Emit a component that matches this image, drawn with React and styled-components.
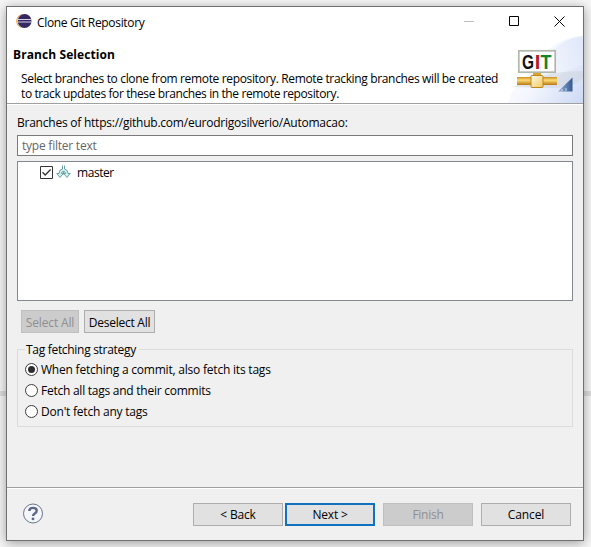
import React from "react";
import styled, { createGlobalStyle } from "styled-components";

const Global = createGlobalStyle`
  * { box-sizing: border-box; }
  body { margin: 0; background: #f7f7f7; overflow: hidden; }
`;

const Desktop = styled.div`
  width: 591px;
  height: 547px;
  padding: 6px;
  background: linear-gradient(#f7f7f7 391px, #dedede 391px, #dedede 396px, #f7f7f7 396px);
  font-family: "Open Sans", "Noto Sans", sans-serif;
  font-size: 12px;
  line-height: 15px;
  color: #000;
`;

const Window = styled.main`
  width: 578px;
  height: 535px;
  border: 1px solid #707070;
  background: #f0f0f0;
  box-shadow: 0 2px 11px rgba(0, 0, 0, 0.38);
  display: flex;
  flex-direction: column;
`;

const Label = styled.span`
  white-space: pre;
  letter-spacing: ${(p) => p.$track || 0}px;
`;

const Header = styled.header`
  position: relative;
  height: 97px;
  flex: none;
  background: #fff;
  border-bottom: 1px solid #a0a0a0;
`;

const TitleBar = styled.div`
  height: 28px;
  padding-left: 9px;
  display: flex;
  align-items: center;
  gap: 5px;
`;

const WindowTitle = styled(Label)`
  padding-top: 2px;
`;

const WindowControls = styled.div`
  margin-left: auto;
  padding-right: 1px;
  display: flex;
`;

const Control = styled.button`
  width: 45px;
  height: 28px;
  border: 0;
  padding: 0;
  background: none;
  display: grid;
  place-items: center;
`;

const PageTitle = styled.h1`
  margin: 12px 0 0 6px;
  font-size: 12px;
  line-height: 15px;
  font-weight: 700;
`;

const Description = styled.p`
  margin: 9px 0 0 14px;
  display: flex;
  flex-direction: column;
`;

const Banner = styled.svg`
  position: absolute;
  right: 0;
  bottom: 0;
`;

const Body = styled.section`
  flex: 1;
  border-top: 1px solid #fff;
  padding: 10px 10px 0;
`;

const Caption = styled.div`
  height: 15px;
`;

const FilterInput = styled.div`
  height: 21px;
  margin-top: 5px;
  padding: 2px 4px;
  border: 1px solid #7a7a7a;
  background: #fff;
  color: #666;
`;

const BranchList = styled.div`
  height: 140px;
  margin-top: 5px;
  padding: 3px 0 0 22px;
  border: 1px solid #828790;
  background: #fff;
`;

const BranchRow = styled.div`
  height: 15px;
  display: flex;
  align-items: center;
  gap: 3px;
`;

const BranchName = styled(Label)`
  margin: 0 0 0 2px;
`;

const Button = styled.button`
  width: ${(p) => p.$width}px;
  height: 23px;
  margin: 0;
  padding: 1px 0 0;
  font: inherit;
  color: ${(p) => (p.disabled ? "#8f8f8f" : "#000")};
  background: ${(p) => (p.disabled ? "#cccccc" : "#e1e1e1")};
  border: ${(p) => (p.$primary ? "2px solid #0f72c0" : `1px solid ${p.disabled ? "#bfbfbf" : "#adadad"}`)};
`;

const SelectionButtons = styled.div`
  display: flex;
  gap: 5px;
  margin: 9px 0 0 4px;
`;

const TagGroup = styled.fieldset`
  height: 85px;
  margin: 9px 0 0;
  padding: 2px 7px 0;
  border: 1px solid #dcdcdc;
  min-width: 0;
`;

const Legend = styled.legend`
  margin: 0;
  padding: 0 3px 0 1px;
`;

const RadioRow = styled.label`
  height: 21px;
  display: flex;
  align-items: center;
  gap: 3px;
`;

const Footer = styled.footer`
  height: 53px;
  flex: none;
  border-top: 1px solid #a0a0a0;
  box-shadow: inset 0 1px #fff;
  padding: 0 12px 0 15px;
  display: flex;
  align-items: center;
`;

const FooterButtons = styled.div`
  margin-left: auto;
  display: flex;
  gap: 8px;
`;

const Navigation = styled.div`
  display: flex;
  gap: 2px;
`;

const EclipseIcon = () => (
  <svg width="16" height="16" viewBox="0 0 16 16">
    <circle cx="7.2" cy="8" r="7" fill="#f39a32" />
    <circle cx="8.2" cy="8" r="7" fill="#fff" />
    <circle cx="8.6" cy="8" r="6.9" fill="#342762" />
    <path d="M1.3 6.500h14.500M1.3 9h14.500" stroke="#d4d1e7" strokeWidth="1.200" />
  </svg>
);

const BranchIcon = () => (
  <svg width="16" height="15" viewBox="0 0 16 15">
    <path d="M6.500.500v3.500Q3 4.500 3 8.500H.8L4 12.500l3.200-4H5.500Q5.500 6.500 7.500 6.300V9.500M8.500.500v3.500Q12 4.500 12 8.500h2.200L11 12.500l-3.200-4h1.700Q9.500 6.500 7.500 6.300" fill="#d3efec" stroke="#5b9ba1" strokeWidth=".9" strokeLinejoin="round" />
  </svg>
);

const CheckIcon = () => (
  <svg width="13" height="13" viewBox="0 0 13 13">
    <path d="M.5.500h12v12H.5z" fill="#fff" stroke="#333" />
    <path d="M2.500 6.300 5.200 9 10.600 3.500" fill="none" stroke="#333" strokeWidth="1.300" />
  </svg>
);

const RadioIcon = ({ checked }) => (
  <svg width="13" height="13" viewBox="0 0 13 13">
    <circle cx="6.500" cy="6.500" r="6" fill="#fff" stroke="#3c3c3c" />
    {checked && <circle cx="6.500" cy="6.500" r="3.500" fill="#2d2d2d" />}
  </svg>
);

const HelpIcon = () => (
  <svg width="22" height="22" viewBox="0 0 22 22">
    <circle cx="11" cy="10.500" r="9.500" fill="#f5f6f9" stroke="#68728f" />
    <path d="M7.300 8Q7.300 4.900 11 4.900q3.700 0 3.700 2.900 0 1.600-1.900 2.700-1.700 1-1.700 2.600" fill="none" stroke="#5d6888" strokeWidth="2.400" />
    <circle cx="11" cy="15.900" r="1.400" fill="#5d6888" />
  </svg>
);

const GitBanner = () => (
  <Banner width="75" height="70" viewBox="0 0 75 70">
    <defs>
      <linearGradient id="sky" x1="0" y1="0.300" x2="1" y2="0.900">
        <stop offset="0" stopColor="#fff" />
        <stop offset=".45" stopColor="#f3f6fd" />
        <stop offset="1" stopColor="#cfdbf5" />
      </linearGradient>
      <linearGradient id="swoosh" x1="0" y1="1" x2="1" y2="0">
        <stop offset="0" stopColor="#f9fbff" />
        <stop offset="1" stopColor="#dbe4f8" />
      </linearGradient>
      <linearGradient id="gold" x1="0" y1="0" x2="0" y2="1">
        <stop offset="0" stopColor="#c98c20" />
        <stop offset=".4" stopColor="#ffdc74" />
        <stop offset="1" stopColor="#b87711" />
      </linearGradient>
      <linearGradient id="joint" x1="0" y1="0" x2="1" y2="1">
        <stop offset="0" stopColor="#fffbe8" />
        <stop offset="1" stopColor="#f1c85c" />
      </linearGradient>
      <linearGradient id="corner">
        <stop offset="0" stopColor="#9eb5d8" />
        <stop offset="1" stopColor="#31588f" />
      </linearGradient>
    </defs>
    <path d="M0 70C4 52 20 45 31 27 42 12 57 4 75 3v67z" fill="url(#sky)" />
    <path d="M32 32C42 16 56 6 75 3v29Q57 36 48 47z" fill="url(#swoosh)" opacity=".7" />
    <path d="M5 54Q35 38 75 38v7Q66 55 44 55z" fill="#ccd1dc" opacity=".5" />
    <rect x="10.800" y="17.800" width="36.400" height="21.400" fill="#fff" stroke="#b2b7ac" strokeWidth="1.700" />
    <g fontFamily="Liberation Sans" fontWeight="700" fontSize="20">
      <text x="14" y="35.800" textLength="12" lengthAdjust="spacingAndGlyphs" fill="#111">G</text>
      <text x="26.800" y="35.800" fill="#ba1722">I</text>
      <text x="32.500" y="35.800" textLength="11" lengthAdjust="spacingAndGlyphs" fill="#168327">T</text>
    </g>
    <path d="M9 44h40v8H9z" fill="url(#gold)" />
    <path d="M25 40h8v4h-8z" fill="#d9a52d" />
    <rect x="23" y="42.500" width="12" height="12" rx="1" fill="url(#joint)" stroke="#be851d" />
    <path d="M50 58.500 64.500 44.500v14z" fill="url(#corner)" />
    <path d="M54 58v-2M58 58v-3" stroke="#e7effb" strokeWidth=".8" />
  </Banner>
);

const strategies = [
  { text: "When fetching a commit, also fetch its tags", track: -0.21, checked: true },
  { text: "Fetch all tags and their commits", track: -0.25 },
  { text: "Don't fetch any tags", track: -0.22 },
];

export default function App() {
  return (
    <>
      <Global />
      <Desktop>
        <Window>
          <Header>
            <GitBanner />
            <TitleBar>
              <EclipseIcon />
              <WindowTitle $track={-0.33}>Clone Git Repository</WindowTitle>
              <WindowControls>
                <Control aria-label="Minimize"><svg width="11" height="11"><path d="M0 5.500h10" stroke="#bbb" /></svg></Control>
                <Control aria-label="Maximize"><svg width="11" height="11"><path d="M.5.500h9v9h-9z" fill="none" stroke="#000" /></svg></Control>
                <Control aria-label="Close"><svg width="11" height="11"><path d="m.5.500 10 10m0-10-10 10" stroke="#000" /></svg></Control>
              </WindowControls>
            </TitleBar>
            <PageTitle><Label $track={0.09}>Branch Selection</Label></PageTitle>
            <Description>
              <Label $track={-0.345}>Select branches to clone from remote repository. Remote tracking branches will be created</Label>
              <Label $track={-0.395}>to track updates for these branches in the remote repository.</Label>
            </Description>
          </Header>
          <Body>
            <Caption><Label $track={-0.235}>Branches of https://github.com/eurodrigosilverio/Automacao:</Label></Caption>
            <FilterInput><Label $track={-0.23}>type filter text</Label></FilterInput>
            <BranchList>
              <BranchRow><CheckIcon /><BranchIcon /><BranchName $track={-0.45}>master</BranchName></BranchRow>
            </BranchList>
            <SelectionButtons>
              <Button $width={58} disabled><Label $track={-0.14}>Select All</Label></Button>
              <Button $width={71}><Label $track={-0.25}>Deselect All</Label></Button>
            </SelectionButtons>
            <TagGroup>
              <Legend><Label $track={-0.3}>Tag fetching strategy</Label></Legend>
              {strategies.map((s) => (
                <RadioRow key={s.text}><RadioIcon checked={s.checked} /><Label $track={s.track}>{s.text}</Label></RadioRow>
              ))}
            </TagGroup>
          </Body>
          <Footer>
            <HelpIcon />
            <FooterButtons>
              <Navigation>
                <Button $width={90}><Label $track={-0.2}>&lt; Back</Label></Button>
                <Button $width={90} $primary><Label $track={-0.2}>Next &gt;</Label></Button>
              </Navigation>
              <Button $width={90} disabled><Label $track={-0.25}>Finish</Label></Button>
              <Button $width={90}><Label $track={-0.1}>Cancel</Label></Button>
            </FooterButtons>
          </Footer>
        </Window>
      </Desktop>
    </>
  );
}
